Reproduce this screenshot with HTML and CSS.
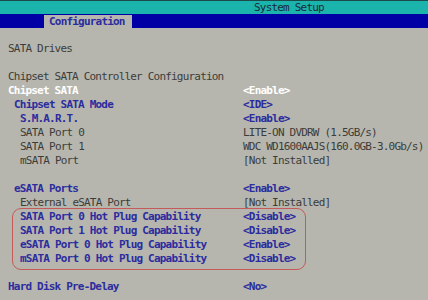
FILE: index.html
```html
<!DOCTYPE html>
<html lang="en">
<head>
    <meta charset="UTF-8">
    <meta name="viewport" content="width=device-width, initial-scale=1.0">
    <title>System Setup</title>
    <link rel="stylesheet" href="styles.css">
</head>
<body>
  <div class="screen">
    <div class="title-bar">
      <span class="title">System Setup</span>
    </div>
    <div class="menu-bar">
      <span class="tab">Configuration</span>
    </div>

    <div class="content">
      <div class="row"><span class="label">SATA Drives</span></div>
      <div class="row blank"></div>
      <div class="row"><span class="label">Chipset SATA Controller Configuration</span></div>
      <div class="row selected"><span class="label">Chipset SATA</span><span class="value">&lt;Enable&gt;</span></div>
      <div class="row option"><span class="label indent-1">Chipset SATA Mode</span><span class="value">&lt;IDE&gt;</span></div>
      <div class="row option"><span class="label indent-2">S.M.A.R.T.</span><span class="value">&lt;Enable&gt;</span></div>
      <div class="row"><span class="label indent-2">SATA Port 0</span><span class="value">LITE-ON DVDRW (1.5GB/s)</span></div>
      <div class="row"><span class="label indent-2">SATA Port 1</span><span class="value">WDC WD1600AAJS(160.0GB-3.0Gb/s)</span></div>
      <div class="row"><span class="label indent-2">mSATA Port</span><span class="value">[Not Installed]</span></div>
      <div class="row blank"></div>
      <div class="row option"><span class="label indent-1">eSATA Ports</span><span class="value">&lt;Enable&gt;</span></div>
      <div class="row"><span class="label indent-2">External eSATA Port</span><span class="value">[Not Installed]</span></div>

      <div class="hotplug">
        <div class="row option"><span class="label">SATA Port 0 Hot Plug Capability</span><span class="value">&lt;Disable&gt;</span></div>
        <div class="row option"><span class="label">SATA Port 1 Hot Plug Capability</span><span class="value">&lt;Disable&gt;</span></div>
        <div class="row option"><span class="label">eSATA Port 0 Hot Plug Capability</span><span class="value">&lt;Enable&gt;</span></div>
        <div class="row option"><span class="label">mSATA Port 0 Hot Plug Capability</span><span class="value">&lt;Disable&gt;</span></div>
      </div>

      <div class="row blank"></div>
      <div class="row option"><span class="label">Hard Disk Pre-Delay</span><span class="value">&lt;No&gt;</span></div>
    </div>
  </div>
</body>
</html>
```

FILE: styles.css
```css
/* BIOS palette */
:root {
    --bios-gray: #b6b6ae;
    --bios-cyan: #1ab4ac;
    --bios-blue: #0000a4;
    --text-gray: #3c3c3a;
    --text-blue: #2c2c9e;
    --text-white: #ffffff;
    --outline-red: #c45a5a;
}

* {
    box-sizing: border-box;
}

body {
    margin: 0;
    background-color: var(--bios-gray);
    font-family: "DejaVu Sans Mono", "Liberation Mono", monospace;
    font-size: 11px;
    letter-spacing: -0.8px;
    color: var(--text-gray);
}

.screen {
    width: 428px;
    height: 300px;
    overflow: hidden;
}

.title-bar {
    height: 14px;
    border-top: 1px solid #1d4a48;
    background-color: var(--bios-cyan);
    padding-left: 254px;
    line-height: 13px;
}

.title {
    color: #1c2a3a;
}

.menu-bar {
    height: 14px;
    background-color: var(--bios-blue);
    padding: 1px 0 0 44px;
}

.tab {
    display: inline-block;
    width: 88px;
    height: 13px;
    line-height: 14px;
    padding-left: 5px;
    background-color: var(--bios-gray);
    color: var(--text-blue);
    font-weight: bold;
}

.content {
    padding: 14px 0 0 8px;
}

.row {
    display: grid;
    grid-template-columns: 235px 1fr;
    height: 14px;
    line-height: 14px;
    white-space: nowrap;
}

.option {
    color: var(--text-blue);
    font-weight: bold;
}

.selected {
    color: var(--text-white);
    font-weight: bold;
}

.indent-1 {
    padding-left: 6px;
}

.indent-2 {
    padding-left: 12px;
}

.hotplug {
    width: 294px;
    margin: -2px 0 -4px 4px;
    padding: 1px 0 3px 0;
    border: 1px solid var(--outline-red);
    border-radius: 9px;
}

.hotplug .row {
    grid-template-columns: 230px 1fr;
}

.hotplug .label {
    padding-left: 7px;
}
```
